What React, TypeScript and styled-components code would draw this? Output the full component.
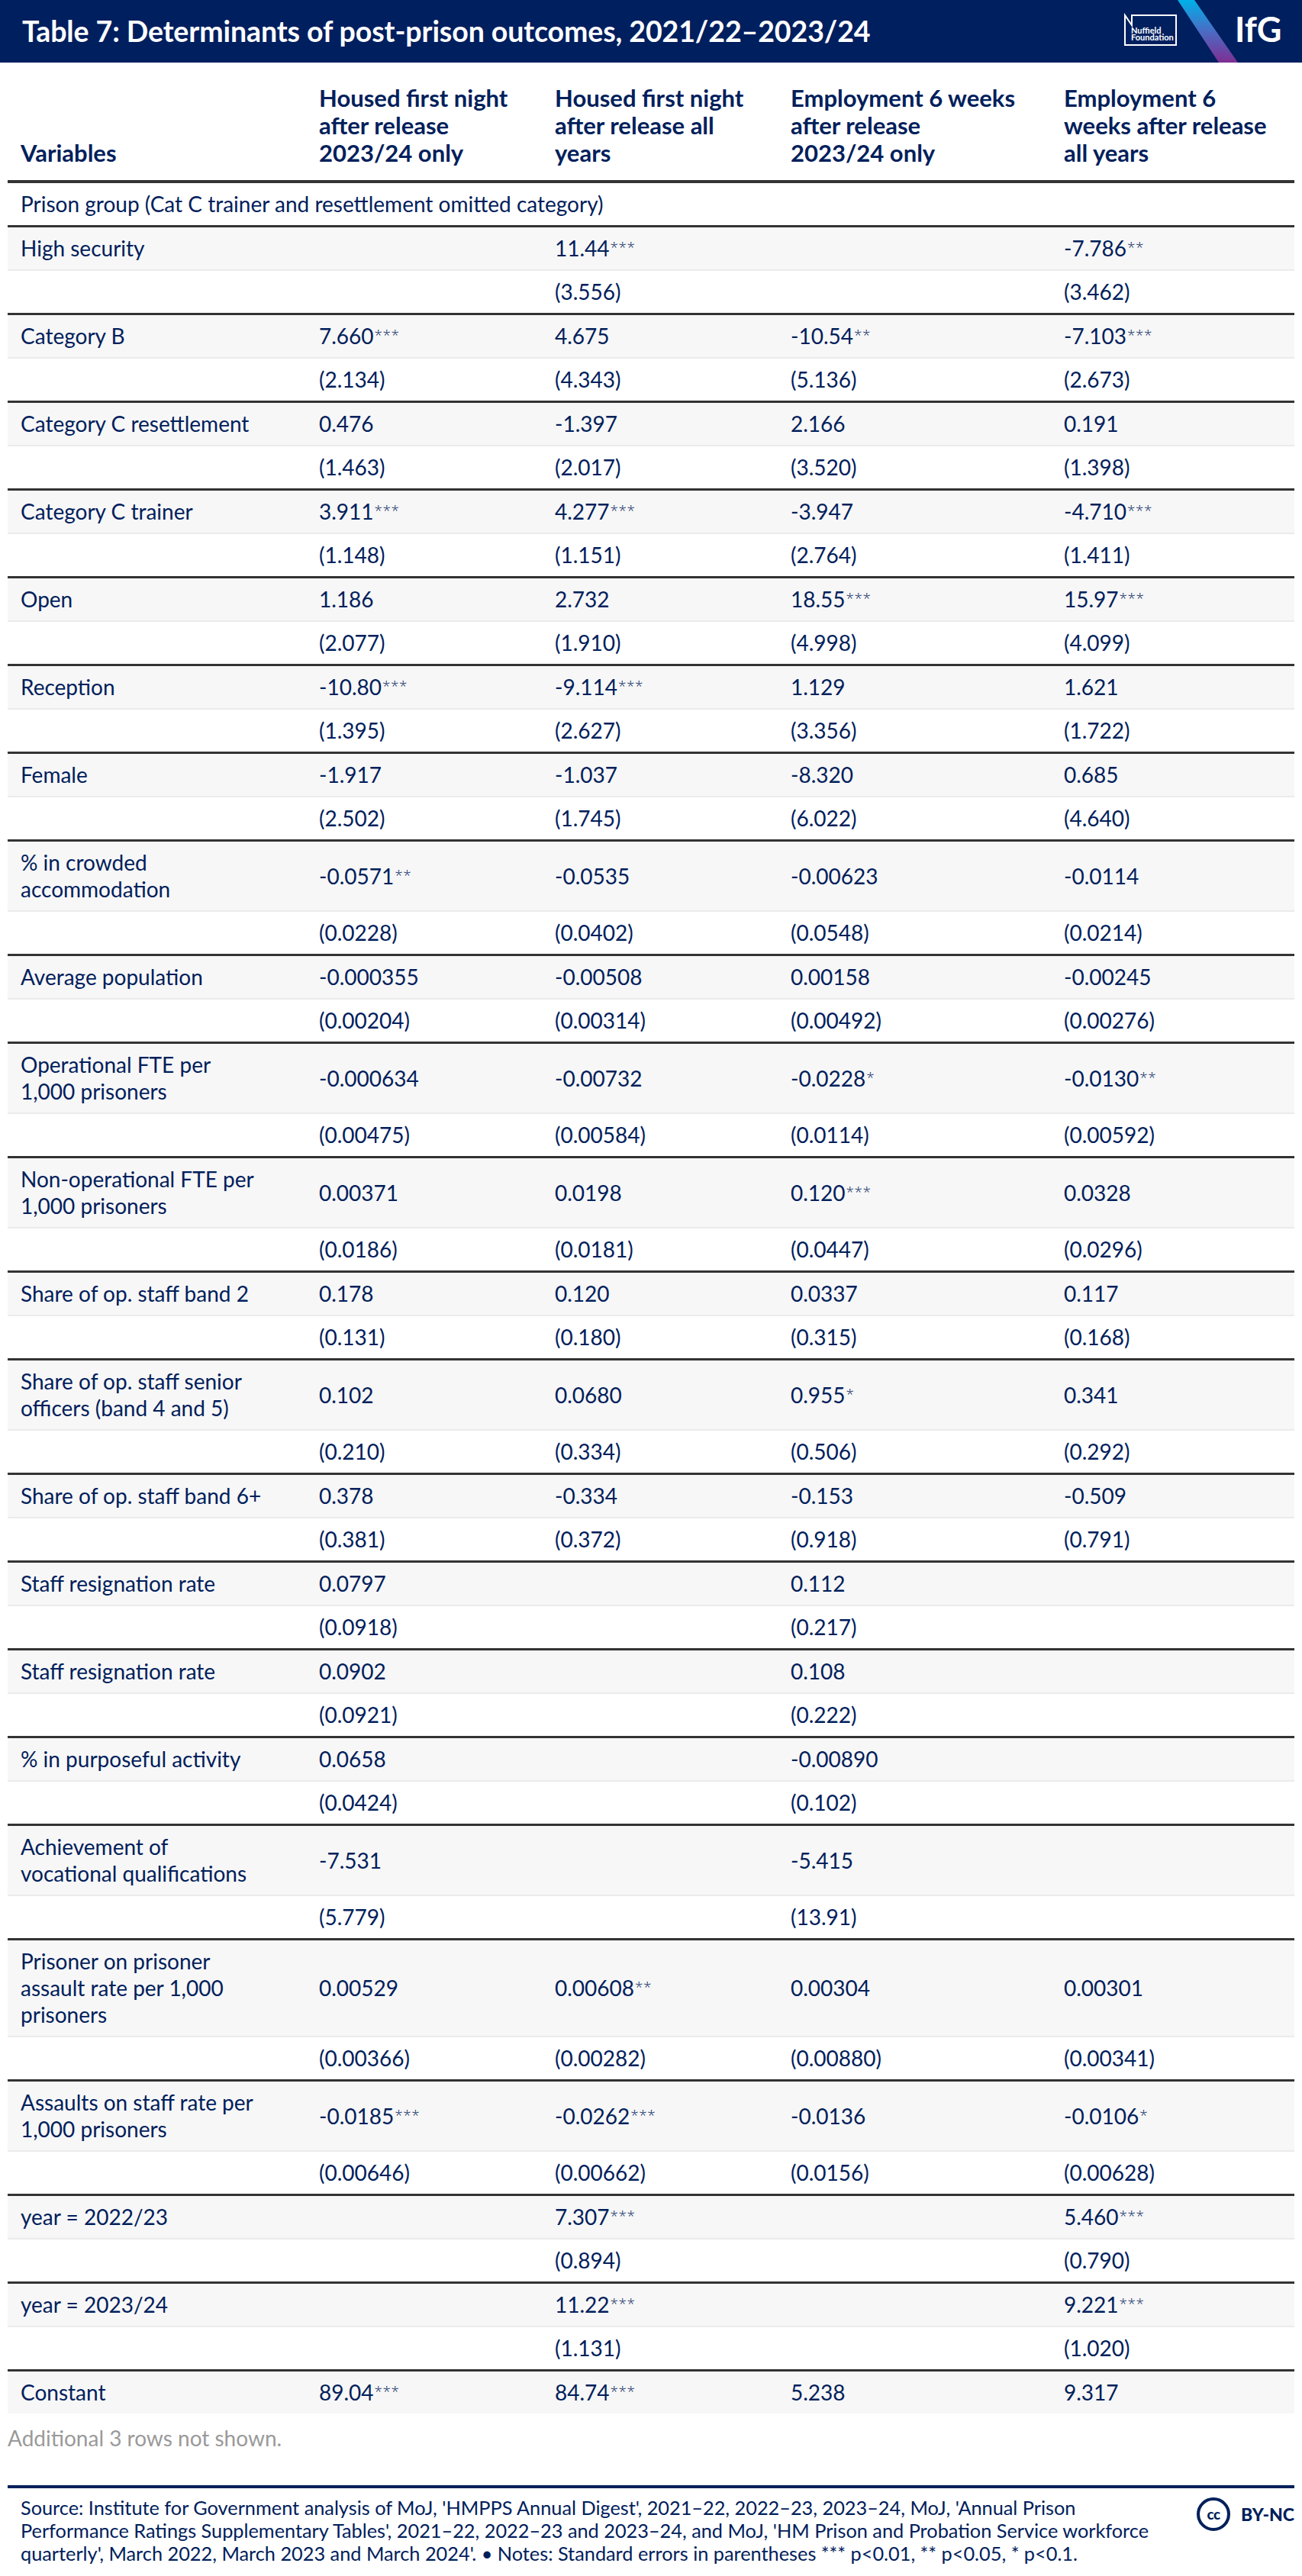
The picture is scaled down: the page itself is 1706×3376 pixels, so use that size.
import React from "react";
import styled, { createGlobalStyle } from "styled-components";

const NAVY = "#00205b";

const GlobalStyle = createGlobalStyle`
  html, body {
    margin: 0;
    padding: 0;
    background: #ffffff;
  }
  body {
    font-family: Lato, "Open Sans", "DejaVu Sans", sans-serif;
    color: ${NAVY};
  }
`;

const Page = styled.div`
  width: 1706px;
`;

const Banner = styled.header`
  height: 82px;
  background: #001f5f;
  display: flex;
  align-items: center;
  justify-content: space-between;
  padding-left: 29px;
  box-sizing: border-box;
  overflow: hidden;
`;

const Title = styled.h1`
  margin: 0;
  color: #ffffff;
  font-size: 37.5px;
  font-weight: 700;
  line-height: 44px;
  letter-spacing: -0.1px;
`;

const Content = styled.main`
  padding: 0 10px;
`;

const Table = styled.table`
  width: 1686px;
  border-collapse: collapse;
  table-layout: fixed;
`;

const Col = styled.col<{ $w: number }>`
  width: ${({ $w }) => $w}px;
`;

const HeadCell = styled.th`
  text-align: left;
  vertical-align: bottom;
  font-size: 31px;
  font-weight: 700;
  line-height: 36px;
  padding: 28px 17px 18px;
  border-bottom: 4px solid #333333;
`;

const BodyRow = styled.tr<{ $kind: "group" | "coef" | "se" }>`
  background: ${({ $kind }) => ($kind === "coef" ? "#f7f7f7" : "#ffffff")};
  border-top: ${({ $kind }) =>
    $kind === "coef" ? "3px solid #333333" : $kind === "se" ? "2px solid #ebebeb" : "none"};
`;

const Cell = styled.td`
  font-size: 28px;
  font-weight: 400;
  line-height: 35px;
  padding: 10px 17px;
  vertical-align: middle;
  white-space: nowrap;
`;

const Stars = styled.span`
  font-family: "Open Sans", "DejaVu Sans", sans-serif;
  font-size: 19px;
  font-weight: 300;
  line-height: 0;
  vertical-align: 5px;
  letter-spacing: 0.5px;
  margin-left: 1px;
  color: ${NAVY};
`;

const Note = styled.p`
  margin: 15px 0 0;
  font-size: 28px;
  line-height: 35px;
  color: #9a9a9a;
`;

const Footer = styled.footer`
  margin-top: 44px;
  border-top: 4px solid ${NAVY};
  padding: 10px 0 0 17px;
  display: flex;
  justify-content: space-between;
  align-items: flex-start;
`;

const Source = styled.p`
  margin: 0;
  font-size: 25.3px;
  line-height: 30px;
`;

const Licence = styled.div`
  display: flex;
  align-items: center;
  gap: 14px;
  margin-top: 2px;
`;

const CcCircle = styled.span`
  width: 44px;
  height: 44px;
  box-sizing: border-box;
  border: 4px solid ${NAVY};
  border-radius: 50%;
  display: flex;
  align-items: center;
  justify-content: center;
  font-size: 19px;
  font-weight: 900;
  letter-spacing: -0.5px;
  line-height: 1;
  padding-bottom: 2px;
`;

const ByNc = styled.span`
  font-size: 23px;
  font-weight: 900;
  line-height: 1;
`;

type DataRow = {
  label: React.ReactNode;
  coef: string[];
  se?: string[];
};

const rows: DataRow[] = [
  { label: "High security", coef: ["", "11.44***", "", "-7.786**"], se: ["", "(3.556)", "", "(3.462)"] },
  { label: "Category B", coef: ["7.660***", "4.675", "-10.54**", "-7.103***"], se: ["(2.134)", "(4.343)", "(5.136)", "(2.673)"] },
  { label: "Category C resettlement", coef: ["0.476", "-1.397", "2.166", "0.191"], se: ["(1.463)", "(2.017)", "(3.520)", "(1.398)"] },
  { label: "Category C trainer", coef: ["3.911***", "4.277***", "-3.947", "-4.710***"], se: ["(1.148)", "(1.151)", "(2.764)", "(1.411)"] },
  { label: "Open", coef: ["1.186", "2.732", "18.55***", "15.97***"], se: ["(2.077)", "(1.910)", "(4.998)", "(4.099)"] },
  { label: "Reception", coef: ["-10.80***", "-9.114***", "1.129", "1.621"], se: ["(1.395)", "(2.627)", "(3.356)", "(1.722)"] },
  { label: "Female", coef: ["-1.917", "-1.037", "-8.320", "0.685"], se: ["(2.502)", "(1.745)", "(6.022)", "(4.640)"] },
  {
    label: <>% in crowded<br />accommodation</>,
    coef: ["-0.0571**", "-0.0535", "-0.00623", "-0.0114"],
    se: ["(0.0228)", "(0.0402)", "(0.0548)", "(0.0214)"],
  },
  { label: "Average population", coef: ["-0.000355", "-0.00508", "0.00158", "-0.00245"], se: ["(0.00204)", "(0.00314)", "(0.00492)", "(0.00276)"] },
  {
    label: <>Operational FTE per<br />1,000 prisoners</>,
    coef: ["-0.000634", "-0.00732", "-0.0228*", "-0.0130**"],
    se: ["(0.00475)", "(0.00584)", "(0.0114)", "(0.00592)"],
  },
  {
    label: <>Non-operational FTE per<br />1,000 prisoners</>,
    coef: ["0.00371", "0.0198", "0.120***", "0.0328"],
    se: ["(0.0186)", "(0.0181)", "(0.0447)", "(0.0296)"],
  },
  { label: "Share of op. staff band 2", coef: ["0.178", "0.120", "0.0337", "0.117"], se: ["(0.131)", "(0.180)", "(0.315)", "(0.168)"] },
  {
    label: <>Share of op. staff senior<br />officers (band 4 and 5)</>,
    coef: ["0.102", "0.0680", "0.955*", "0.341"],
    se: ["(0.210)", "(0.334)", "(0.506)", "(0.292)"],
  },
  { label: "Share of op. staff band 6+", coef: ["0.378", "-0.334", "-0.153", "-0.509"], se: ["(0.381)", "(0.372)", "(0.918)", "(0.791)"] },
  { label: "Staff resignation rate", coef: ["0.0797", "", "0.112", ""], se: ["(0.0918)", "", "(0.217)", ""] },
  { label: "Staff resignation rate", coef: ["0.0902", "", "0.108", ""], se: ["(0.0921)", "", "(0.222)", ""] },
  { label: "% in purposeful activity", coef: ["0.0658", "", "-0.00890", ""], se: ["(0.0424)", "", "(0.102)", ""] },
  {
    label: <>Achievement of<br />vocational qualifications</>,
    coef: ["-7.531", "", "-5.415", ""],
    se: ["(5.779)", "", "(13.91)", ""],
  },
  {
    label: <>Prisoner on prisoner<br />assault rate per 1,000<br />prisoners</>,
    coef: ["0.00529", "0.00608**", "0.00304", "0.00301"],
    se: ["(0.00366)", "(0.00282)", "(0.00880)", "(0.00341)"],
  },
  {
    label: <>Assaults on staff rate per<br />1,000 prisoners</>,
    coef: ["-0.0185***", "-0.0262***", "-0.0136", "-0.0106*"],
    se: ["(0.00646)", "(0.00662)", "(0.0156)", "(0.00628)"],
  },
  { label: "year = 2022/23", coef: ["", "7.307***", "", "5.460***"], se: ["", "(0.894)", "", "(0.790)"] },
  { label: "year = 2023/24", coef: ["", "11.22***", "", "9.221***"], se: ["", "(1.131)", "", "(1.020)"] },
  { label: "Constant", coef: ["89.04***", "84.74***", "5.238", "9.317"] },
];

const Value = ({ text }: { text: string }) => {
  const m = text.match(/^(.*?)(\**)$/);
  const num = m ? m[1] : text;
  const stars = m ? m[2] : "";
  return (
    <>
      {num}
      {stars && <Stars>{stars}</Stars>}
    </>
  );
};

const IfgLogos = () => (
  <svg width="256" height="82" viewBox="0 0 256 82">
    <defs>
      <linearGradient id="stripe" x1="0" y1="0" x2="0" y2="1">
        <stop offset="0" stopColor="#00b0e8" />
        <stop offset="0.5" stopColor="#4a6cc4" />
        <stop offset="1" stopColor="#7f2e93" />
      </linearGradient>
    </defs>
    <path d="M24 59 V20 L33 33 V20 H91 V59 Z" fill="none" stroke="#ffffff" strokeWidth="2" />
    <text x="32" y="43.5" fill="#ffffff" fontFamily="Lato, sans-serif" fontWeight="700" fontSize="11">
      Nuffield
    </text>
    <text x="32" y="52.5" fill="#ffffff" fontFamily="Lato, sans-serif" fontWeight="700" fontSize="11">
      Foundation
    </text>
    <polygon points="93,0 115,0 172,82 147,82" fill="url(#stripe)" />
    <text x="168" y="55" fill="#ffffff" fontFamily="Lato, sans-serif" fontWeight="700" fontSize="45">
      IfG
    </text>
  </svg>
);

export default function App() {
  return (
    <Page>
      <GlobalStyle />
      <Banner>
        <Title>Table 7: Determinants of post-prison outcomes, 2021/22–2023/24</Title>
        <IfgLogos />
      </Banner>
      <Content>
        <Table>
          <colgroup>
            <Col $w={391} />
            <Col $w={309} />
            <Col $w={309} />
            <Col $w={358} />
            <Col $w={319} />
          </colgroup>
          <thead>
            <tr>
              <HeadCell>Variables</HeadCell>
              <HeadCell>Housed first night<br />after release<br />2023/24 only</HeadCell>
              <HeadCell>Housed first night<br />after release all<br />years</HeadCell>
              <HeadCell>Employment 6 weeks<br />after release<br />2023/24 only</HeadCell>
              <HeadCell>Employment 6<br />weeks after release<br />all years</HeadCell>
            </tr>
          </thead>
          <tbody>
            <BodyRow $kind="group">
              <Cell colSpan={5}>Prison group (Cat C trainer and resettlement omitted category)</Cell>
            </BodyRow>
            {rows.map((row, i) => (
              <React.Fragment key={i}>
                <BodyRow $kind="coef">
                  <Cell>{row.label}</Cell>
                  {row.coef.map((v, j) => (
                    <Cell key={j}>
                      <Value text={v} />
                    </Cell>
                  ))}
                </BodyRow>
                {row.se && (
                  <BodyRow $kind="se">
                    <Cell />
                    {row.se.map((v, j) => (
                      <Cell key={j}>{v}</Cell>
                    ))}
                  </BodyRow>
                )}
              </React.Fragment>
            ))}
          </tbody>
        </Table>
        <Note>Additional 3 rows not shown.</Note>
        <Footer>
          <Source>
            Source: Institute for Government analysis of MoJ, 'HMPPS Annual Digest', 2021–22, 2022–23, 2023–24, MoJ, 'Annual Prison
            <br />
            Performance Ratings Supplementary Tables', 2021–22, 2022–23 and 2023–24, and MoJ, 'HM Prison and Probation Service workforce
            <br />
            quarterly', March 2022, March 2023 and March 2024'. • Notes: Standard errors in parentheses *** p&lt;0.01, ** p&lt;0.05, * p&lt;0.1.
          </Source>
          <Licence>
            <CcCircle>cc</CcCircle>
            <ByNc>BY-NC</ByNc>
          </Licence>
        </Footer>
      </Content>
    </Page>
  );
}
